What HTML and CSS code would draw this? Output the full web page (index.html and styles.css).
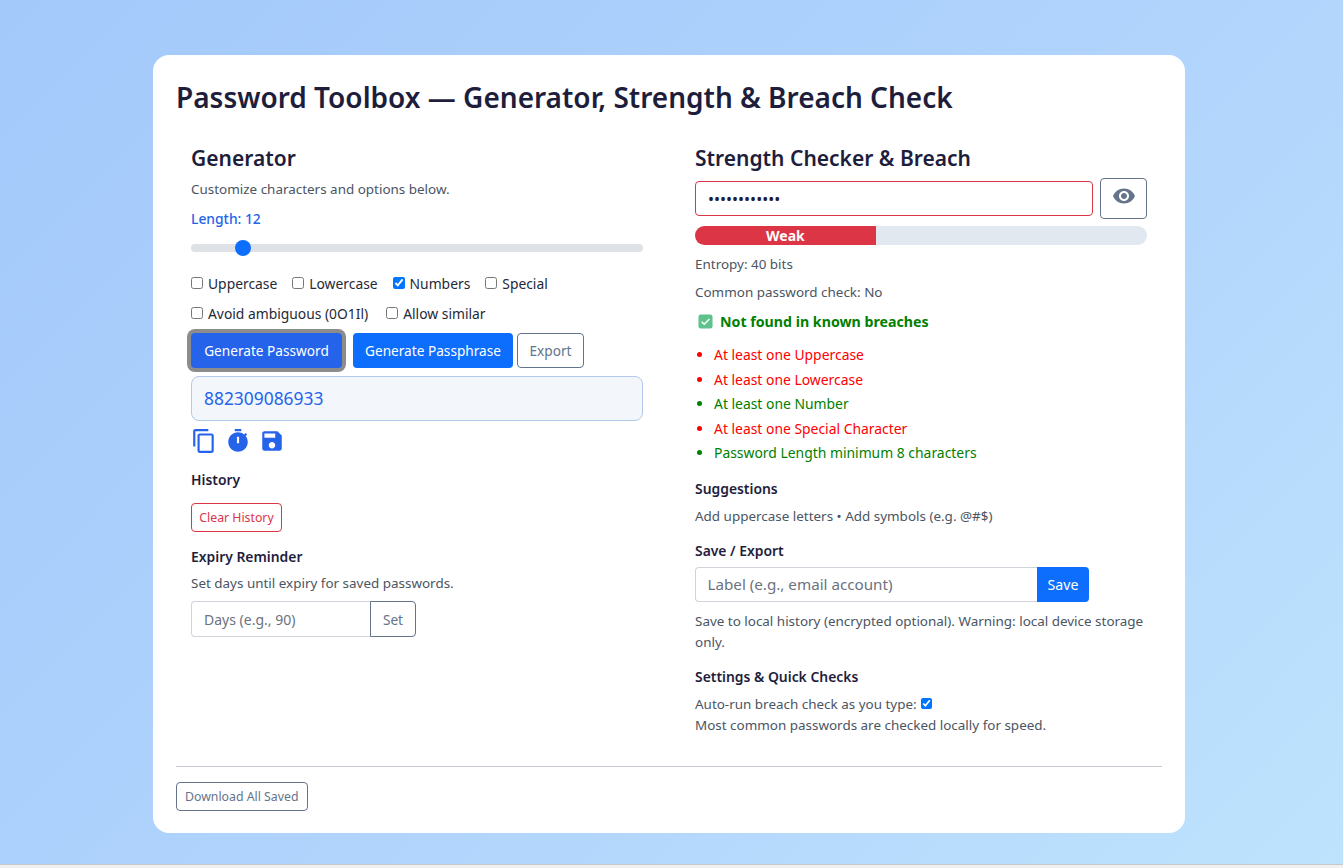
FILE: index.html
```html
<!DOCTYPE html>
<html lang="en">
<head>
<meta charset="utf-8">
<title>Password Toolbox</title>
<link rel="stylesheet" href="styles.css">
</head>
<body>
<main class="card">
  <h1 class="title">Password Toolbox — Generator, Strength &amp; Breach Check</h1>
  <div class="cols">
    <section class="col">
      <h2 class="heading">Generator</h2>
      <p class="muted desc">Customize characters and options below.</p>
      <div class="length">Length: 12</div>
      <input class="slider" type="range" min="8" max="48" value="12">
      <div class="checks checks-a">
        <label class="check"><input type="checkbox">Uppercase</label>
        <label class="check"><input type="checkbox">Lowercase</label>
        <label class="check"><input type="checkbox" checked>Numbers</label>
        <label class="check"><input type="checkbox">Special</label>
      </div>
      <div class="checks checks-b">
        <label class="check"><input type="checkbox">Avoid ambiguous (0O1Il)</label>
        <label class="check"><input type="checkbox">Allow similar</label>
      </div>
      <div class="actions">
        <button class="btn btn-focus">Generate Password</button>
        <button class="btn btn-primary btn-phrase">Generate Passphrase</button>
        <button class="btn btn-outline btn-export">Export</button>
      </div>
      <div class="output">882309086933</div>
      <div class="icons">
        <svg class="icon" viewBox="0 0 24 24"><path d="M16 1H4c-1.1 0-2 .9-2 2v14h2V3h12V1zm3 4H8c-1.1 0-2 .9-2 2v14c0 1.1.9 2 2 2h11c1.1 0 2-.9 2-2V7c0-1.1-.9-2-2-2zm0 16H8V7h11v14z"/></svg>
        <svg class="icon" viewBox="0 0 24 24"><path d="M15 1H9v2h6V1zm4.03 6.39 1.42-1.42c-.43-.51-.9-.99-1.41-1.41l-1.42 1.42C16.07 4.74 14.12 4 12 4c-4.97 0-9 4.03-9 9s4.02 9 9 9 9-4.03 9-9c0-2.12-.74-4.07-1.97-5.61zM13 14h-2V8h2v6z"/></svg>
        <svg class="icon" viewBox="0 0 24 24"><path d="M17 3H5c-1.11 0-2 .9-2 2v14c0 1.1.89 2 2 2h14c1.1 0 2-.9 2-2V7l-4-4zm-5 16c-1.66 0-3-1.34-3-3s1.34-3 3-3 3 1.34 3 3-1.34 3-3 3zm3-10H5V5h10v4z"/></svg>
      </div>
      <h3 class="sub sub-history">History</h3>
      <button class="btn btn-small btn-danger">Clear History</button>
      <h3 class="sub sub-expiry">Expiry Reminder</h3>
      <p class="muted expiry-text">Set days until expiry for saved passwords.</p>
      <div class="group group-days">
        <input class="field group-field" type="text" placeholder="Days (e.g., 90)">
        <button class="btn btn-outline group-btn">Set</button>
      </div>
    </section>
    <section class="col">
      <h2 class="heading">Strength Checker &amp; Breach</h2>
      <div class="pw-row">
        <input class="field pw-field" type="password" value="882309086933">
        <button class="btn btn-outline eye-btn" aria-label="Show password">
          <svg class="eye" viewBox="0 0 24 24"><path d="M12 4.5C7 4.5 2.73 7.61 1 12c1.73 4.39 6 7.5 11 7.5s9.27-3.11 11-7.5c-1.73-4.39-6-7.5-11-7.5zM12 17c-2.76 0-5-2.24-5-5s2.24-5 5-5 5 2.24 5 5-2.24 5-5 5zm0-8c-1.66 0-3 1.34-3 3s1.34 3 3 3 3-1.34 3-3-1.34-3-3-3z"/></svg>
        </button>
      </div>
      <div class="progress"><div class="progress-bar" style="width:40%">Weak</div></div>
      <p class="muted entropy">Entropy: 40 bits</p>
      <p class="muted common">Common password check: No</p>
      <div class="breach">
        <svg class="tick" viewBox="0 0 16 16"><rect x="0.5" y="0.5" width="15" height="15" rx="2.5" fill="#5fc28a"/><path d="M3.8 8.2l2.9 2.7 5.5-5.6" fill="none" stroke="#fff" stroke-width="1.6"/></svg>
        <span>Not found in known breaches</span>
      </div>
      <ul class="rules">
        <li class="bad">At least one Uppercase</li>
        <li class="bad">At least one Lowercase</li>
        <li class="good">At least one Number</li>
        <li class="bad">At least one Special Character</li>
        <li class="good">Password Length minimum 8 characters</li>
      </ul>
      <h3 class="sub sub-suggest">Suggestions</h3>
      <p class="muted suggest-text">Add uppercase letters • Add symbols (e.g. @#$)</p>
      <h3 class="sub sub-save">Save / Export</h3>
      <div class="group group-save">
        <input class="field group-field" type="text" placeholder="Label (e.g., email account)">
        <button class="btn btn-primary group-btn">Save</button>
      </div>
      <p class="muted save-text">Save to local history (encrypted optional). Warning: local device storage only.</p>
      <h3 class="sub sub-settings">Settings &amp; Quick Checks</h3>
      <p class="muted settings-text">Auto-run breach check as you type: <input class="inline-check" type="checkbox" checked><br>Most common passwords are checked locally for speed.</p>
    </section>
  </div>
  <hr class="rule">
  <button class="btn btn-small btn-outline btn-download">Download All Saved</button>
</main>
<div class="strip"></div>
</body>
</html>
```
FILE: styles.css
```css
* { box-sizing: border-box; }
html, body { height: 100%; }
body {
  margin: 0;
  height: 868px;
  overflow: hidden;
  background: linear-gradient(135deg, #a3c9fb 0%, #b0d4fc 55%, #bee3fd 100%);
  font-family: "Noto Sans", "Open Sans", sans-serif;
  color: #1e1e3c;
  position: relative;
}
.strip {
  position: absolute;
  left: 0; right: 0; bottom: 0;
  height: 4px;
  background: #f0f0f0;
  border-top: 1px solid #c8c8c8;
}
.card {
  width: 1032px;
  height: 778px;
  margin: 0 0 0 153px;
  position: relative;
  top: 55px;
  background: #fff;
  border-radius: 16px;
  padding: 21px 23px;
}
.title { margin: 0; font-size: 28px; line-height: 42px; font-weight: 600; }
.cols { display: grid; grid-template-columns: 1fr 1fr; column-gap: 22px; margin-top: 25px; }
.col { padding: 0 15px; height: 623px; }
.heading { margin: 0; font-size: 21px; line-height: 30px; font-weight: 600; }
.muted { margin: 0; color: #4b5563; font-size: 13.45px; line-height: 21px; }
.desc { margin-top: 6px; }
.length { margin-top: 8px; font-size: 13.85px; line-height: 21px; font-weight: 500; color: #2563eb; }
.slider {
  display: block;
  -webkit-appearance: none;
  appearance: none;
  width: 100%;
  height: 16px;
  margin: 11px 0 0;
  background: transparent;
}
.slider::-webkit-slider-runnable-track { height: 8px; border-radius: 4px; background: #dee2e6; }
.slider::-webkit-slider-thumb {
  -webkit-appearance: none;
  width: 16px; height: 16px;
  margin-top: -4px;
  border-radius: 50%;
  background: #0d6efd;
}
.checks { display: flex; gap: 15px; font-size: 13.85px; line-height: 21px; }
.checks-a { margin-top: 17px; }
.checks-b { margin-top: 9px; gap: 18px; }
.check { display: flex; align-items: center; color: #1f2937; }
.check input { width: 12px; height: 12px; margin: 0 5px 2px 0; }
.actions { display: flex; margin-top: 9px; gap: 4px; align-items: center; }
.btn {
  font-family: inherit;
  font-size: 13.65px;
  line-height: 21px;
  height: 35px;
  padding: 0 12px;
  border-radius: 4px;
  border: 1px solid transparent;
  background: transparent;
  white-space: nowrap;
}
.btn-focus { background: #2563eb; color: #fff; width: 151px; padding: 0; box-shadow: 0 0 0 4px #8c8c8c; margin-right: 7px; }
.btn-primary { background: #0d6efd; color: #fff; }
.btn-phrase { width: 160px; padding: 0; }
.btn-export { width: 67px; padding: 0; }
.btn-outline { border-color: #64748b; color: #64748b; }
.btn-small { height: 29px; font-size: 12.3px; line-height: 18px; padding: 0 8px; }
.btn-danger { border-color: #dc3545; color: #dc3545; display: block; width: 91px; padding: 0; margin-top: 13px; }
.output {
  margin-top: 8px;
  height: 45px;
  padding: 0 12px 2px;
  display: flex;
  align-items: center;
  background: #f3f7fb;
  border: 1px solid #b3c9ea;
  border-radius: 8px;
  color: #2563eb;
  font-size: 17.4px;
}
.icons { display: flex; gap: 8px; margin-top: 7px; height: 26px; }
.icon { width: 26px; height: 26px; fill: #2563eb; }
.sub { margin: 0; font-size: 13.9px; line-height: 21px; font-weight: 600; color: #1e1e3c; }
.sub-history { margin-top: 15px; }
.sub-expiry { margin-top: 14px; }
.expiry-text { margin-top: 6px; }
.group { display: flex; }
.group-days { margin-top: 7px; width: 225px; }
.group-save { margin-top: 6px; width: 394px; }
.field {
  font-family: inherit;
  font-size: 14px;
  height: 35px;
  padding: 0 12px;
  border: 1px solid #ced4da;
  border-radius: 4px;
  color: #212529;
  background: #fff;
}
.field::placeholder { color: #6b7280; opacity: 1; }
.group-field { flex: 1; min-width: 0; border-radius: 4px 0 0 4px; border-right: 0; }
.group-btn { border-radius: 0 4px 4px 0; }
.group-days .field, .group-days .group-btn { height: 36px; }
.group-save .field { font-size: 15.2px; padding-left: 11.5px; }
.group-save .group-btn { width: 52px; padding: 0; font-size: 14.2px; }
.pw-row { display: flex; gap: 7px; align-items: center; margin-top: 5px; }
.pw-field { flex: 1; min-width: 0; border-color: #dc3545; color: #1e1e3c; font-size: 16px; }
.eye-btn { width: 47px; height: 41px; padding: 0; display: flex; align-items: center; justify-content: center; }
.eye { width: 24px; height: 24px; fill: #64748b; margin-top: -6px; }
.progress { height: 19px; margin-top: 7px; border-radius: 10px; background: #e2e8f0; overflow: hidden; }
.progress-bar { height: 100%; background: #dc3545; color: #fff; font-size: 14px; line-height: 19px; font-weight: 700; text-align: center; }
.entropy { margin-top: 9px; }
.common { margin-top: 7px; }
.breach { display: flex; align-items: center; gap: 7px; margin: 8px 0 0 3px; font-size: 14.2px; line-height: 21px; font-weight: 700; color: #008000; }
.tick { width: 15px; height: 15px; }
.rules { margin: 11px 0 0; padding: 0 0 0 19px; font-size: 13.9px; line-height: 24.5px; }
.bad { color: #ff0000; }
.good { color: #008000; }
.sub-suggest { margin-top: 12px; }
.suggest-text { margin-top: 7px; }
.sub-save { margin-top: 13px; }
.save-text { margin-top: 9px; }
.sub-settings { margin-top: 13px; }
.settings-text { margin-top: 7px; }
.inline-check { width: 11px; height: 11px; margin: 0 0 0 1px; }
.rule { margin: 0; border: 0; border-top: 1px solid #c9c9d2; }
.btn-download { display: block; margin-top: 15px; }
```
